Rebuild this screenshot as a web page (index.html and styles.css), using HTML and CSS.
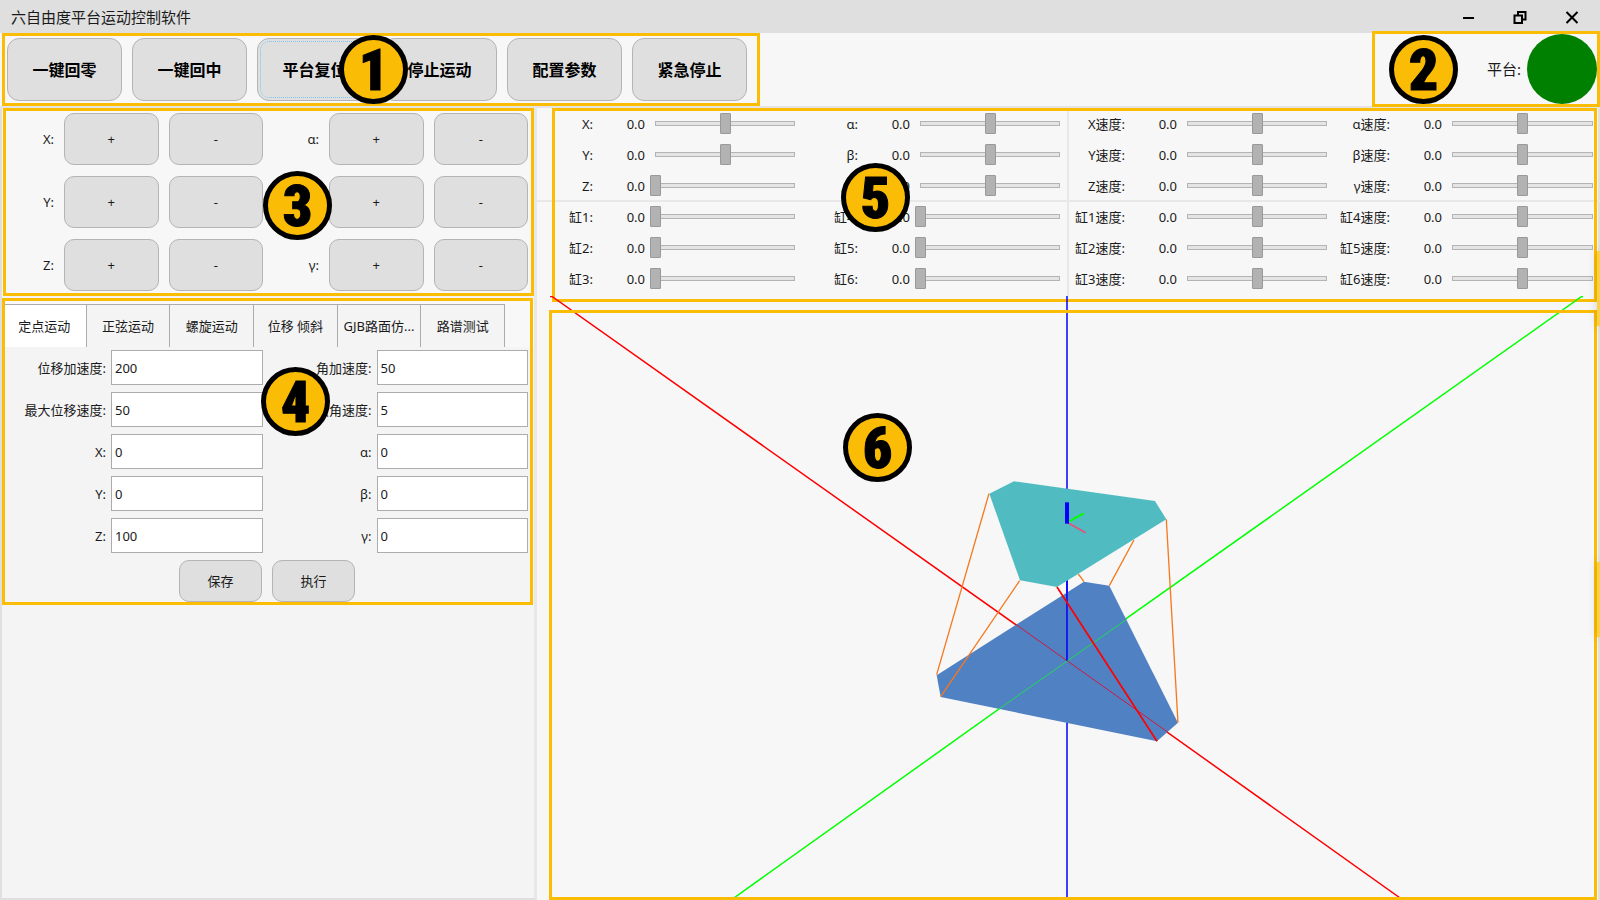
FILE: index.html
```html
<!DOCTYPE html>
<html lang="zh-CN">
<head>
<meta charset="utf-8">
<title>六自由度平台运动控制软件</title>
<link rel="stylesheet" href="styles.css">
</head>
<body>
<div class="window">
  <header class="titlebar">
    <h1 class="title">六自由度平台运动控制软件</h1>
    <div class="window-buttons">
      <button class="window-button" aria-label="最小化"><svg width="16" height="16" viewBox="0 0 16 16"><path d="M3 9h11" stroke="#000" stroke-width="2"/></svg></button>
      <button class="window-button" aria-label="还原"><svg width="16" height="16" viewBox="0 0 16 16" fill="none" stroke="#000" stroke-width="2"><path d="M2.500 6.500h7.500v7.500h-7.500zM6 6V3h7.500v7.500h-3"/></svg></button>
      <button class="window-button" aria-label="关闭"><svg width="16" height="16" viewBox="0 0 16 16"><path d="M2.500 3l11 11M13.500 3l-11 11" stroke="#000" stroke-width="2"/></svg></button>
    </div>
  </header>

  <div class="toolbar">
    <div class="commands">
      <button class="command">一键回零</button>
      <button class="command">一键回中</button>
      <button class="command focused">平台复位</button>
      <button class="command">停止运动</button>
      <button class="command">配置参数</button>
      <button class="command">紧急停止</button>
      <span class="frame frame-1"></span><span class="badge badge-1">1</span>
    </div>
    <div class="status">
      <span class="status-label">平台:</span><span class="lamp"></span>
      <span class="frame frame-2"></span><span class="badge badge-2">2</span>
    </div>
  </div>

  <main class="content">
    <section class="side">
      <div class="jog">
        <span class="jog-label">X:</span><button class="jog-button">+</button><button class="jog-button">-</button>
        <span class="jog-label">α:</span><button class="jog-button">+</button><button class="jog-button">-</button>
        <span class="jog-label">Y:</span><button class="jog-button">+</button><button class="jog-button">-</button>
        <span class="jog-label">β:</span><button class="jog-button">+</button><button class="jog-button">-</button>
        <span class="jog-label">Z:</span><button class="jog-button">+</button><button class="jog-button">-</button>
        <span class="jog-label">γ:</span><button class="jog-button">+</button><button class="jog-button">-</button>
        <span class="frame frame-3"></span><span class="badge badge-3">3</span>
      </div>
      <div class="motion">
        <div class="tabs" role="tablist">
          <button class="tab active" role="tab">定点运动</button>
          <button class="tab" role="tab">正弦运动</button>
          <button class="tab" role="tab">螺旋运动</button>
          <button class="tab" role="tab">位移 倾斜</button>
          <button class="tab" role="tab">GJB路面仿...</button>
          <button class="tab" role="tab">路谱测试</button>
        </div>
        <form class="fields">
          <label class="field-label" for="acc">位移加速度:</label><input class="field" id="acc" value="200">
          <label class="field-label" for="aacc">角加速度:</label><input class="field" id="aacc" value="50">
          <label class="field-label" for="vel">最大位移速度:</label><input class="field" id="vel" value="50">
          <label class="field-label" for="avel">最大角速度:</label><input class="field" id="avel" value="5">
          <label class="field-label" for="px">X:</label><input class="field" id="px" value="0">
          <label class="field-label" for="pa">α:</label><input class="field" id="pa" value="0">
          <label class="field-label" for="py">Y:</label><input class="field" id="py" value="0">
          <label class="field-label" for="pb">β:</label><input class="field" id="pb" value="0">
          <label class="field-label" for="pz">Z:</label><input class="field" id="pz" value="100">
          <label class="field-label" for="pg">γ:</label><input class="field" id="pg" value="0">
        </form>
        <div class="actions">
          <button class="action">保存</button>
          <button class="action">执行</button>
        </div>
        <span class="frame frame-4"></span><span class="badge badge-4">4</span>
      </div>
    </section>

    <section class="view">
      <div class="monitor">
        <div class="group">
          <label class="name" for="s1">X:</label><output class="value">0.0</output><input class="slider" id="s1" type="range" value="50">
          <label class="name" for="s2">Y:</label><output class="value">0.0</output><input class="slider" id="s2" type="range" value="50">
          <label class="name" for="s3">Z:</label><output class="value">0.0</output><input class="slider" id="s3" type="range" value="0">
          <label class="name" for="s4">缸1:</label><output class="value">0.0</output><input class="slider" id="s4" type="range" value="0">
          <label class="name" for="s5">缸2:</label><output class="value">0.0</output><input class="slider" id="s5" type="range" value="0">
          <label class="name" for="s6">缸3:</label><output class="value">0.0</output><input class="slider" id="s6" type="range" value="0">
        </div>
        <div class="group">
          <label class="name" for="s7">α:</label><output class="value">0.0</output><input class="slider" id="s7" type="range" value="50">
          <label class="name" for="s8">β:</label><output class="value">0.0</output><input class="slider" id="s8" type="range" value="50">
          <label class="name" for="s9">γ:</label><output class="value">0.0</output><input class="slider" id="s9" type="range" value="50">
          <label class="name" for="s10">缸4:</label><output class="value">0.0</output><input class="slider" id="s10" type="range" value="0">
          <label class="name" for="s11">缸5:</label><output class="value">0.0</output><input class="slider" id="s11" type="range" value="0">
          <label class="name" for="s12">缸6:</label><output class="value">0.0</output><input class="slider" id="s12" type="range" value="0">
        </div>
        <div class="group speed">
          <label class="name" for="s13">X速度:</label><output class="value">0.0</output><input class="slider" id="s13" type="range" value="50">
          <label class="name" for="s14">Y速度:</label><output class="value">0.0</output><input class="slider" id="s14" type="range" value="50">
          <label class="name" for="s15">Z速度:</label><output class="value">0.0</output><input class="slider" id="s15" type="range" value="50">
          <label class="name" for="s16">缸1速度:</label><output class="value">0.0</output><input class="slider" id="s16" type="range" value="50">
          <label class="name" for="s17">缸2速度:</label><output class="value">0.0</output><input class="slider" id="s17" type="range" value="50">
          <label class="name" for="s18">缸3速度:</label><output class="value">0.0</output><input class="slider" id="s18" type="range" value="50">
        </div>
        <div class="group">
          <label class="name" for="s19">α速度:</label><output class="value">0.0</output><input class="slider" id="s19" type="range" value="50">
          <label class="name" for="s20">β速度:</label><output class="value">0.0</output><input class="slider" id="s20" type="range" value="50">
          <label class="name" for="s21">γ速度:</label><output class="value">0.0</output><input class="slider" id="s21" type="range" value="50">
          <label class="name" for="s22">缸4速度:</label><output class="value">0.0</output><input class="slider" id="s22" type="range" value="50">
          <label class="name" for="s23">缸5速度:</label><output class="value">0.0</output><input class="slider" id="s23" type="range" value="50">
          <label class="name" for="s24">缸6速度:</label><output class="value">0.0</output><input class="slider" id="s24" type="range" value="50">
        </div>
        <span class="frame frame-5"></span><span class="badge badge-5">5</span>
      </div>
      <div class="scene">
        <svg class="model" viewBox="537 296 1063 604" preserveAspectRatio="xMidYMin meet" role="img" aria-label="平台三维模型">
          <g fill="none" stroke-width="1.500">
            <path d="M550 296.500h2L1066.700 660.700 1403 900" stroke="#f00"/>
            <path d="M731 900L1066.700 660.700 1581 297l2-.5" stroke="#0f0"/>
            <path d="M1067 296V900" stroke="#00f" stroke-width="1.500"/>
          </g>
          <g transform="translate(900 450) scale(.3333)" fill="none" stroke-width="4">
            <path d="M110 676L552 395 628 407 834 818 771 874 122 741z" fill="#5081c2"/>
            <path d="M347 523L804 847" stroke="#d01840" stroke-width="3"/>
            <path d="M297 777L680 508" stroke="#1edc50" stroke-width="3"/>
            <path d="M501 390V632" stroke="#00f" stroke-width="4.500"/>
            <path d="M267 131L110 674M359 392L122 740M799 208L834 818M702 270L628 407M535 372L552 395" stroke="#f47a20"/>
            <path d="M268 131L342 94 765 153 799 208 471 411 360 391z" fill="#50bcc1"/>
            <path d="M471 411L771 874" stroke="#f00" stroke-width="5"/>
            <path d="M508 214L551 190" stroke="#0f0" stroke-width="6"/>
            <path d="M505 219L557 248" stroke="#e8507a" stroke-width="5"/>
            <path d="M501 157V221" stroke="#00f" stroke-width="12"/>
          </g>
        </svg>
        <span class="frame frame-6"></span><span class="badge badge-6">6</span>
      </div>
      <span class="edge-tab edge-upper"></span>
      <span class="edge-tab edge-lower"></span>
    </section>
  </main>
</div>
</body>
</html>
```
FILE: styles.css
```css
* { box-sizing: border-box; }

body {
  margin: 0;
  font-family: "Noto Sans", "Noto Sans CJK SC", sans-serif;
  font-size: 13px;
  line-height: 20px;
  color: #1a1a1a;
  background: #f7f7f7;
}

button, input { font: inherit; color: inherit; }

.window {
  display: flex;
  flex-direction: column;
  min-height: 100vh;
  overflow: hidden;
}

.titlebar {
  display: flex;
  align-items: center;
  justify-content: space-between;
  height: 33px;
  padding: 0 20px 0 11px;
  background: #dfdfdf;
}

.title { margin: 0; font-size: 15px; font-weight: 400; }

.window-buttons { display: flex; gap: 36px; }

.window-button {
  display: flex;
  padding: 0;
  border: 0;
  background: none;
}

.toolbar {
  display: flex;
  justify-content: space-between;
  height: 75px;
  border-bottom: 2px solid #e4e4e4;
}

.commands {
  position: relative;
  display: flex;
  gap: 10px;
  padding: 5px 13px 5px 7px;
}

.command {
  width: 115px;
  border: 1px solid #b4b4b4;
  border-radius: 12px;
  background: #dfdfdf;
  color: #000;
  font-size: 16px;
  font-weight: 700;
}

.focused { outline: 1px dotted #7cc4f4; outline-offset: -4px; }

.status {
  position: relative;
  display: flex;
  align-items: center;
  gap: 6px;
  padding: 0 3px 1px 0;
}

.status-label { font-size: 15px; }

.lamp { width: 70px; height: 70px; border-radius: 50%; background: #008000; }

.frame {
  position: absolute;
  border: 3px solid #fbbc05;
  pointer-events: none;
}

.badge {
  position: absolute;
  display: flex;
  align-items: center;
  justify-content: center;
  width: 69px;
  height: 69px;
  border: 5px solid #000;
  border-radius: 50%;
  background: #fbbc05;
  color: #000;
  font: 900 58px/58px Impact, "Liberation Sans Narrow", "Roboto Condensed", Roboto, sans-serif;
  -webkit-text-stroke: 1px #000;
}

.frame-1 { inset: 0 0 0 2px; }
.frame-2 { inset: -2px 0 -1px -115px; }
.frame-3 { inset: 0 0 0 1px; }
.frame-4 { inset: 0 1px -3px 0; }
.frame-5 { inset: 0 3px -6px 15px; }
.frame-6 { inset: 14px 3px 0 12px; }

.badge-1 { left: 339px; top: 2px; }
.badge-2 { left: -98px; top: 2px; }
.badge-3 { left: 261px; top: 63px; }
.badge-4 { left: 259px; top: 69px; }
.badge-5 { left: 304px; top: 55px; }
.badge-6 { left: 306px; top: 117px; }

.content {
  display: grid;
  grid-template-columns: 537px 1fr;
  flex: 1;
}

.side {
  display: flex;
  flex-direction: column;
  border: solid #dfdfdf;
  border-width: 0 3px 2px 2px;
  border-right-color: #e8e8e8;
  background: #f4f4f4;
}

.jog {
  position: relative;
  display: grid;
  grid-template-columns: 52px 1fr 1fr 46px 1fr 1fr;
  grid-auto-rows: 52px;
  gap: 11px 10px;
  padding: 5px 6px 5px 0;
  background: #f7f7f7;
}

.jog-label { align-self: center; text-align: right; }

.jog-button {
  border: 1px solid #b4b4b4;
  border-radius: 10px;
  background: #dfdfdf;
}

.motion {
  position: relative;
  margin-top: 2px;
}

.tabs {
  display: flex;
  height: 49px;
  padding: 6px 29px 0 1px;
  background: #f8f8f8;
}

.tab {
  flex: 1;
  padding: 0;
  border: solid #acacac;
  border-width: 1px 0 0 1px;
  background: #f4f4f4;
  white-space: nowrap;
}

.tab:last-child { border-right-width: 1px; }

.active { border-left: 0; background: #fff; }

.fields {
  display: grid;
  grid-template-columns: 104px 1fr 104px 1fr;
  grid-auto-rows: 35px;
  gap: 7px 5px;
  padding: 3px 6px 7px 0;
}

.field-label { align-self: center; text-align: right; white-space: nowrap; }

.field {
  min-width: 0;
  padding: 0 3px;
  border: 1px solid #acacac;
  background: #fff;
}

.actions { display: flex; gap: 10px; padding-left: 177px; }

.action {
  width: 83px;
  height: 42px;
  border: 1px solid #b4b4b4;
  border-radius: 10px;
  background: #dfdfdf;
}

.view {
  position: relative;
  display: flex;
  flex-direction: column;
  box-shadow: inset -2px 0 #e0e0e0;
}

.monitor {
  position: relative;
  display: grid;
  grid-template-columns: 265fr 265fr 267fr 266fr;
  height: 188px;
  background: linear-gradient(#e8e8e8, #e8e8e8) 0 92px / 100% 2px no-repeat;
}

.group {
  display: grid;
  grid-template-columns: 56px 47px 1fr;
  grid-template-rows: repeat(6, 1fr);
  column-gap: 5px;
  align-items: center;
  padding: 0 2px 2px 0;
}

.speed { border-left: 2px solid #e8e8e8; }

.name, .value { text-align: right; white-space: nowrap; }

.slider {
  width: 100%;
  min-width: 0;
  height: 21px;
  margin: 0;
  appearance: none;
  background:
    linear-gradient(#e4e4e4, #e4e4e4) center / calc(100% - 12px) 3px no-repeat,
    linear-gradient(#b4b4b4, #b4b4b4) center / calc(100% - 10px) 5px no-repeat;
}

.slider::-webkit-slider-thumb {
  appearance: none;
  width: 11px;
  height: 21px;
  border: 1px solid #999;
  border-radius: 1px;
  background: #b2b2b2;
}

.scene { position: relative; flex: 1; }

.model { display: block; width: 100%; }

.edge-tab {
  position: absolute;
  right: 0;
  width: 3px;
  height: 75px;
  background: #fdcf45;
  box-shadow: 0 0 8px rgba(0, 0, 0, 0.250);
}

.edge-upper { top: 143px; }
.edge-lower { top: 454px; }
```
